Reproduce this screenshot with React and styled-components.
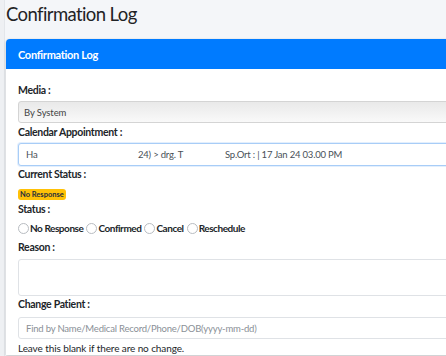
import React from 'react';
import styled, { createGlobalStyle } from 'styled-components';

const GlobalStyle = createGlobalStyle`
  html, body {
    margin: 0;
    padding: 0;
    background: #f4f6f9;
    overflow: hidden;
  }
  body {
    font-family: Lato, "Liberation Sans", sans-serif;
    color: #212529;
  }
`;

const Shell = styled.div`
  display: flex;
  width: 446px;
  height: 356px;
  overflow: hidden;
`;

const Edge = styled.div`
  flex: 0 0 4px;
  background: #eef0f3;
  border-right: 1px solid #e3e6ea;
`;

const Content = styled.div`
  flex: 0 0 auto;
  padding: 2px 0 0 1px;
`;

const PageTitle = styled.h1`
  margin: 0 0 12px;
  font-size: 18.5px;
  font-weight: 400;
  line-height: 25px;
  letter-spacing: -0.6px;
  color: #1f2326;
`;

const Card = styled.div`
  width: 480px;
  background: #fff;
  border-radius: 4px 0 0 0;
  box-shadow: 0 0 1px rgba(0, 0, 0, 0.13), 0 1px 3px rgba(0, 0, 0, 0.2);
`;

const CardHeader = styled.div`
  background: #007bff;
  color: #fff;
  height: 30px;
  display: flex;
  align-items: center;
  padding: 0 12px;
  font-size: 11px;
  font-weight: 700;
  letter-spacing: -0.3px;
  border-radius: 4px 0 0 0;
`;

const CardBody = styled.div`
  padding: 14px 12px 0;
  display: flex;
  flex-direction: column;
`;

const Label = styled.div`
  font-size: 10.5px;
  font-weight: 700;
  line-height: 14px;
  letter-spacing: -0.3px;
  margin-bottom: ${(p) => p.$gap || 4}px;
`;

const SelectBox = styled.div`
  height: 20px;
  border: 1px solid #d4d4d4;
  border-radius: 3px;
  background: linear-gradient(#e9e9e9, #f9f9f9);
  display: flex;
  align-items: center;
  padding-left: 5px;
  font-size: 9.5px;
  letter-spacing: -0.1px;
  color: #444;
  margin-bottom: 2px;
`;

const Input = styled.div`
  height: ${(p) => p.$h}px;
  border: 1px solid ${(p) => (p.$focus ? '#a8cdf7' : '#dfe2e6')};
  border-radius: 3px;
  background: #fff;
  display: flex;
  align-items: center;
  padding-left: 7px;
  font-size: 9.5px;
  letter-spacing: -0.2px;
  color: ${(p) => (p.$placeholder ? '#8a9097' : '#495057')};
  box-shadow: ${(p) => (p.$focus ? '0 0 0 1px #e3effd' : 'none')};
  margin-bottom: ${(p) => p.$after || 0}px;
`;

const Chunk = styled.span`
  width: ${(p) => p.$w}px;
  flex: 0 0 auto;
  white-space: nowrap;
`;

const Badge = styled.span`
  align-self: flex-start;
  background: #ffc107;
  color: #1f2d3d;
  font-size: 7.5px;
  font-weight: 700;
  line-height: 11px;
  padding: 0 2px;
  border-radius: 3px;
  margin: 4px 0 2px;
`;

const RadioRow = styled.div`
  display: flex;
  align-items: center;
  height: 12px;
  margin: 0 0 6px;
`;

const RadioItem = styled.label`
  display: flex;
  align-items: center;
  font-size: 10px;
  font-weight: 700;
  letter-spacing: -0.45px;
  margin-right: 3px;
`;

const Circle = styled.span`
  width: 9px;
  height: 9px;
  border: 1px solid #b8bcc1;
  border-radius: 50%;
  margin-right: 1px;
  background: #fff;
`;

const Help = styled.div`
  font-size: 10px;
  letter-spacing: -0.1px;
  line-height: 14px;
  color: #212529;
`;

const statuses = ['No Response', 'Confirmed', 'Cancel', 'Reschedule'];

export default function App() {
  return (
    <>
      <GlobalStyle />
      <Shell>
        <Edge />
        <Content>
          <PageTitle>Confirmation Log</PageTitle>
          <Card>
            <CardHeader>Confirmation Log</CardHeader>
            <CardBody>
              <Label $gap={4}>Media :</Label>
              <SelectBox>By System</SelectBox>
              <Label $gap={4}>Calendar Appointment :</Label>
              <Input $focus $h={21} $after={1}>
                <Chunk $w={112}>Ha</Chunk>
                <Chunk $w={87}>24) &gt; drg. T</Chunk>
                <Chunk $w={140}>Sp.Ort : | 17 Jan 24 03.00 PM</Chunk>
              </Input>
              <Label $gap={4}>Current Status :</Label>
              <Badge>No Response</Badge>
              <Label $gap={6}>Status :</Label>
              <RadioRow>
                {statuses.map((s) => (
                  <RadioItem key={s}>
                    <Circle />
                    {s}
                  </RadioItem>
                ))}
              </RadioRow>
              <Label $gap={5}>Reason :</Label>
              <Input $h={35} $after={1} />
              <Label $gap={6}>Change Patient :</Label>
              <Input $placeholder $h={20} $after={2}>
                Find by Name/Medical Record/Phone/DOB(yyyy-mm-dd)
              </Input>
              <Help>Leave this blank if there are no change.</Help>
            </CardBody>
          </Card>
        </Content>
      </Shell>
    </>
  );
}
